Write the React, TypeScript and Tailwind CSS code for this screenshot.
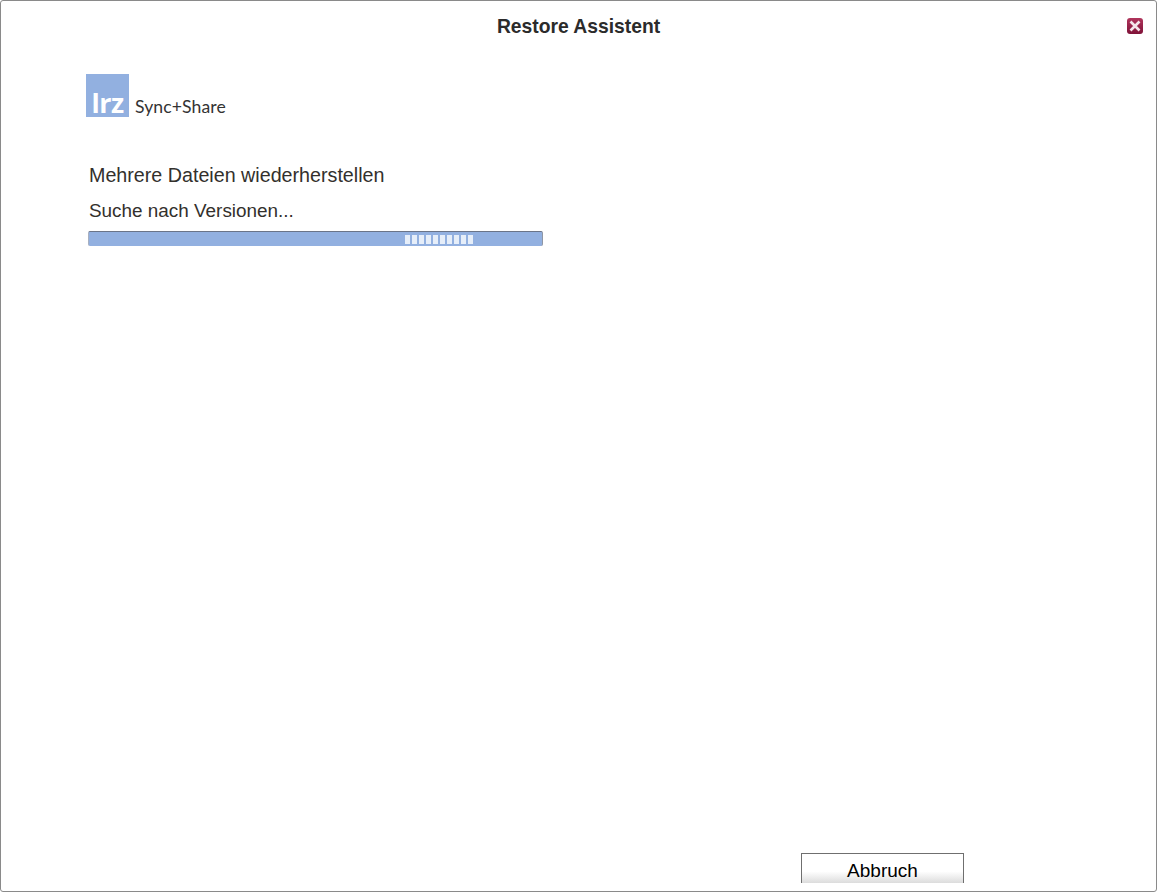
const segments = Array.from({ length: 10 });

function CloseIcon() {
  return (
    <svg width="16" height="16" viewBox="0 0 16 16" className="block">
      <defs>
        <linearGradient id="closeBg" x1="0" y1="0" x2="0" y2="1">
          <stop offset="0" stopColor="#b0355c" />
          <stop offset="1" stopColor="#7f1238" />
        </linearGradient>
      </defs>
      <rect x="0" y="0" width="16" height="16" rx="3" fill="url(#closeBg)" />
      <path d="M3.5 3.5 L12.5 12.5 M12.5 3.5 L3.5 12.5" stroke="#f4e6ea" strokeWidth="2.6" />
    </svg>
  );
}

export default function App() {
  return (
    <div className="w-[1157px] h-[892px] bg-white border border-[#8a8a8a] rounded-[3px] flex flex-col overflow-hidden font-['Liberation_Sans',Arial,sans-serif] text-[#2b2b2b]">
      <header className="h-[51px] shrink-0 relative flex items-center justify-center">
        <h1 className="text-[19.3px] font-bold leading-none">Restore Assistent</h1>
        <button className="absolute right-[13px] top-[17px]">
          <CloseIcon />
        </button>
      </header>

      <main className="flex-1 pl-[85px] pt-[22px]">
        <div className="flex items-end">
          <div className="w-[43px] h-[43px] bg-[#92b0e0] flex items-end justify-center">
            <span className="text-white font-bold text-[27px] leading-[28px] tracking-[-0.5px] font-['Open_Sans',sans-serif]">
              lrz
            </span>
          </div>
          <span className="ml-[6px] text-[17.6px] leading-[20px] tracking-[0.1px] text-[#333] font-['Lato',sans-serif]">
            Sync+Share
          </span>
        </div>

        <div className="pl-[3px] mt-[46px] text-[19.7px] leading-[24px] text-[#33302c]">
          Mehrere Dateien wiederherstellen
        </div>
        <div className="pl-[3px] mt-[12px] text-[18.9px] leading-[24px] text-[#33302c]">
          Suche nach Versionen...
        </div>

        <div className="ml-[2px] mt-[8px] w-[455px] h-[15px] bg-[#92b0e0] rounded-[2px] border-t border-t-[#6a7488] border-l border-l-[#a8b0c0] border-r border-r-[#8f96a4] flex items-center pl-[316px] gap-[2px]">
          {segments.map((_, i) => (
            <div key={i} className="w-[5px] h-[9px] bg-[#e6eef9]" />
          ))}
        </div>
      </main>

      <footer className="h-[38px] shrink-0 pl-[800px]">
        <button className="w-[163px] h-[30px] pt-[2px] border border-b-0 border-[#6f6f6f] bg-gradient-to-b from-white from-60% to-[#dcdcdc] text-black text-[19px] leading-[30px]">
          Abbruch
        </button>
      </footer>
    </div>
  );
}
